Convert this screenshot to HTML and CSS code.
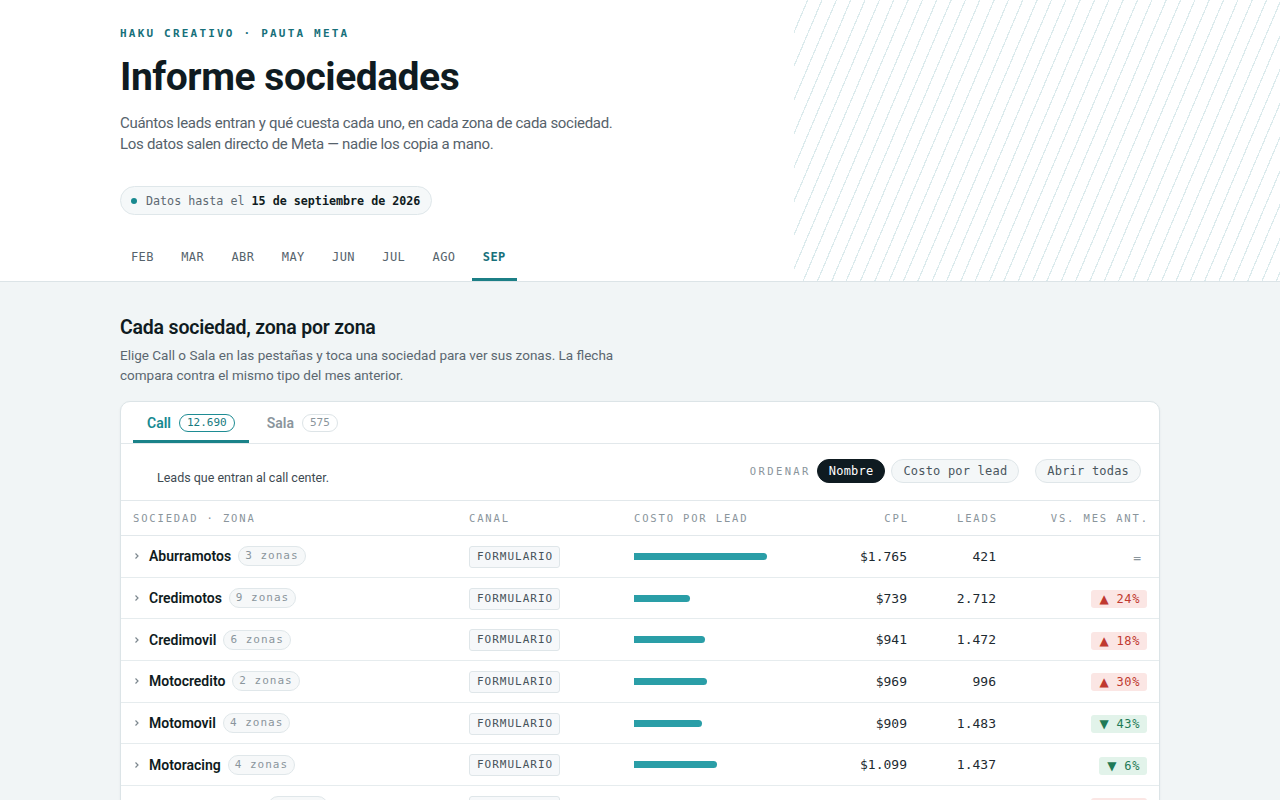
FILE: index.html
```html
<!DOCTYPE html>
<html lang="es">
<head>
<meta charset="utf-8">
<title>Informe sociedades</title>
<link rel="stylesheet" href="styles.css">
</head>
<body>
<header class="hero">
  <div class="hero-pattern"></div>
  <div class="wrap hero-inner">
    <p class="eyebrow">HAKU CREATIVO · PAUTA META</p>
    <h1>Informe sociedades</h1>
    <p class="lede">Cuántos leads entran y qué cuesta cada uno, en cada zona de cada sociedad.<br>Los datos salen directo de Meta — nadie los copia a mano.</p>
    <div class="stamp"><span class="dot"></span><span class="stamp-label">Datos hasta el</span><strong class="stamp-date">15 de septiembre de 2026</strong></div>
    <nav class="months">
      <span class="month">FEB</span>
      <span class="month">MAR</span>
      <span class="month">ABR</span>
      <span class="month">MAY</span>
      <span class="month">JUN</span>
      <span class="month">JUL</span>
      <span class="month">AGO</span>
      <span class="month active">SEP</span>
    </nav>
  </div>
</header>

<main class="wrap section">
  <h2>Cada sociedad, zona por zona</h2>
  <p class="section-sub">Elige Call o Sala en las pestañas y toca una sociedad para ver sus zonas. La flecha<br>compara contra el mismo tipo del mes anterior.</p>

  <div class="card">
    <div class="ctabs">
      <div class="ctab active">Call <span class="count">12.690</span></div>
      <div class="ctab">Sala <span class="count">575</span></div>
    </div>

    <div class="toolbar">
      <p class="note">Leads que entran al call center.</p>
      <div class="controls">
        <span class="ord-label">ORDENAR</span>
        <span class="btn on">Nombre</span>
        <span class="btn">Costo por lead</span>
        <span class="btn open">Abrir todas</span>
      </div>
    </div>

    <div class="thead grid">
      <span>SOCIEDAD · ZONA</span>
      <span>CANAL</span>
      <span>COSTO POR LEAD</span>
      <span class="r">CPL</span>
      <span class="r">LEADS</span>
      <span class="r">VS. MES ANT.</span>
    </div>

    <div class="trow grid">
      <div class="soc"><svg class="chev" viewBox="0 0 8 8"><polyline points="2.5,1.5 5,4 2.5,6.5"/></svg><span class="name">Aburramotos</span><span class="zonas">3 zonas</span></div>
      <div><span class="chip">FORMULARIO</span></div>
      <div><div class="bar" style="width:133px"></div></div>
      <div class="num">$1.765</div>
      <div class="num">421</div>
      <div class="delta"><span class="eq">=</span></div>
    </div>

    <div class="trow grid">
      <div class="soc"><svg class="chev" viewBox="0 0 8 8"><polyline points="2.5,1.5 5,4 2.5,6.5"/></svg><span class="name">Credimotos</span><span class="zonas">9 zonas</span></div>
      <div><span class="chip">FORMULARIO</span></div>
      <div><div class="bar" style="width:56px"></div></div>
      <div class="num">$739</div>
      <div class="num">2.712</div>
      <div class="delta"><span class="pill up"><span class="tri">▲</span> 24%</span></div>
    </div>

    <div class="trow grid">
      <div class="soc"><svg class="chev" viewBox="0 0 8 8"><polyline points="2.5,1.5 5,4 2.5,6.5"/></svg><span class="name">Credimovil</span><span class="zonas">6 zonas</span></div>
      <div><span class="chip">FORMULARIO</span></div>
      <div><div class="bar" style="width:71px"></div></div>
      <div class="num">$941</div>
      <div class="num">1.472</div>
      <div class="delta"><span class="pill up"><span class="tri">▲</span> 18%</span></div>
    </div>

    <div class="trow grid">
      <div class="soc"><svg class="chev" viewBox="0 0 8 8"><polyline points="2.5,1.5 5,4 2.5,6.5"/></svg><span class="name">Motocredito</span><span class="zonas">2 zonas</span></div>
      <div><span class="chip">FORMULARIO</span></div>
      <div><div class="bar" style="width:73px"></div></div>
      <div class="num">$969</div>
      <div class="num">996</div>
      <div class="delta"><span class="pill up"><span class="tri">▲</span> 30%</span></div>
    </div>

    <div class="trow grid">
      <div class="soc"><svg class="chev" viewBox="0 0 8 8"><polyline points="2.5,1.5 5,4 2.5,6.5"/></svg><span class="name">Motomovil</span><span class="zonas">4 zonas</span></div>
      <div><span class="chip">FORMULARIO</span></div>
      <div><div class="bar" style="width:68px"></div></div>
      <div class="num">$909</div>
      <div class="num">1.483</div>
      <div class="delta"><span class="pill down"><span class="tri">▼</span> 43%</span></div>
    </div>

    <div class="trow grid">
      <div class="soc"><svg class="chev" viewBox="0 0 8 8"><polyline points="2.5,1.5 5,4 2.5,6.5"/></svg><span class="name">Motoracing</span><span class="zonas">4 zonas</span></div>
      <div><span class="chip">FORMULARIO</span></div>
      <div><div class="bar" style="width:83px"></div></div>
      <div class="num">$1.099</div>
      <div class="num">1.437</div>
      <div class="delta"><span class="pill down"><span class="tri">▼</span> 6%</span></div>
    </div>

    <div class="trow grid">
      <div class="soc"><svg class="chev" viewBox="0 0 8 8"><polyline points="2.5,1.5 5,4 2.5,6.5"/></svg><span class="name">Motos del Oriente</span><span class="zonas">1 zona</span></div>
      <div><span class="chip">FORMULARIO</span></div>
      <div><div class="bar" style="width:90px"></div></div>
      <div class="num">$1.190</div>
      <div class="num">612</div>
      <div class="delta"><span class="pill up"><span class="tri">▲</span> 12%</span></div>
    </div>

    <div class="trow grid">
      <div class="soc"><svg class="chev" viewBox="0 0 8 8"><polyline points="2.5,1.5 5,4 2.5,6.5"/></svg><span class="name">Rapimotos</span><span class="zonas">3 zonas</span></div>
      <div><span class="chip">FORMULARIO</span></div>
      <div><div class="bar" style="width:62px"></div></div>
      <div class="num">$822</div>
      <div class="num">1.081</div>
      <div class="delta"><span class="pill down"><span class="tri">▼</span> 9%</span></div>
    </div>
  </div>
</main>
</body>
</html>
```

FILE: styles.css
```css
* { box-sizing: border-box; }

body {
  margin: 0;
  background: #f1f5f6;
  font-family: Roboto, "Noto Sans", sans-serif;
  color: #0f1b21;
}

.wrap {
  width: 1040px;
  margin: 0 auto;
}

/* ---------- hero ---------- */
.hero {
  position: relative;
  background: #ffffff;
  border-bottom: 1px solid #dce4e7;
  overflow: hidden;
}

.hero-pattern {
  position: absolute;
  top: 0;
  right: 0;
  bottom: 0;
  width: 38%;
  background: repeating-linear-gradient(113deg, rgba(255,255,255,0) 0 12px, #dcebed 12px 13.2px);
}

.hero-inner {
  position: relative;
  padding-top: 26px;
}

.eyebrow {
  margin: 0;
  font-family: "DejaVu Sans Mono", "Liberation Mono", monospace;
  font-size: 11px;
  line-height: 16px;
  font-weight: 700;
  letter-spacing: 2.2px;
  color: #17707a;
}

h1 {
  margin: 14px 0 0;
  font-size: 39px;
  line-height: 43px;
  font-weight: 700;
  letter-spacing: -0.012em;
  color: #0f1b21;
}

.lede {
  margin: 14px 0 0;
  font-size: 15px;
  line-height: 21px;
  letter-spacing: -0.3px;
  color: #56626b;
}

.stamp {
  display: inline-flex;
  align-items: center;
  height: 29px;
  margin-top: 31px;
  padding: 0 11px 0 10px;
  border: 1px solid #dfe7ea;
  border-radius: 15px;
  background: #f5f8f9;
  font-family: "DejaVu Sans Mono", "Liberation Mono", monospace;
  font-size: 11.7px;
}

.dot {
  width: 6px;
  height: 6px;
  border-radius: 50%;
  background: #18898f;
  margin-right: 9px;
}

.stamp-label {
  color: #5d6972;
  margin-right: 7px;
}

.stamp-date {
  font-weight: 700;
  color: #0f1b21;
}

.months {
  display: flex;
  gap: 5.5px;
  margin-top: 22px;
}

.month {
  padding: 12px 11px 13px;
  border-bottom: 3px solid transparent;
  font-family: "DejaVu Sans Mono", "Liberation Mono", monospace;
  font-size: 12px;
  line-height: 16px;
  letter-spacing: 0.03em;
  color: #56636c;
}

.month.active {
  color: #17707a;
  font-weight: 700;
  border-bottom-color: #1c7f86;
}

/* ---------- section ---------- */
.section {
  padding-top: 34px;
  padding-bottom: 40px;
}

h2 {
  margin: 0;
  font-size: 19.5px;
  line-height: 24px;
  font-weight: 600;
  letter-spacing: -0.01em;
}

.section-sub {
  margin: 5px 0 0;
  font-size: 13.5px;
  line-height: 20px;
  color: #5b6770;
}

.card {
  margin-top: 16px;
  background: #ffffff;
  border: 1px solid #dce4e7;
  border-radius: 10px;
  box-shadow: 0 1px 3px rgba(16, 40, 50, 0.05);
  overflow: hidden;
}

.ctabs {
  display: flex;
  gap: 4px;
  padding-left: 12px;
  border-bottom: 1px solid #e2e8eb;
}

.ctab {
  display: flex;
  align-items: center;
  gap: 8px;
  height: 41px;
  padding: 3px 14px 0;
  border-bottom: 3px solid transparent;
  font-size: 14px;
  font-weight: 600;
  color: #8a959c;
}

.ctab.active {
  color: #168990;
  border-bottom-color: #1a8289;
}

.count {
  font-family: "DejaVu Sans Mono", "Liberation Mono", monospace;
  font-size: 11px;
  line-height: 16px;
  font-weight: 400;
  padding: 0 7px;
  border: 1px solid #dde4e7;
  border-radius: 9px;
  color: #8a959c;
}

.ctab.active .count {
  border-color: #1e8c93;
  color: #167a80;
}

.toolbar {
  display: flex;
  justify-content: space-between;
  height: 57px;
  padding: 15px 18px 13px 36px;
  border-bottom: 1px solid #e2e8eb;
}

.note {
  align-self: flex-end;
  margin: 0;
  font-size: 12.5px;
  line-height: 18px;
  color: #3e4a52;
}

.controls {
  display: flex;
  align-items: center;
  align-self: flex-start;
}

.ord-label {
  margin-right: 6px;
  font-family: "DejaVu Sans Mono", "Liberation Mono", monospace;
  font-size: 10.5px;
  letter-spacing: 2.4px;
  color: #8a959c;
}

.btn {
  height: 24px;
  padding: 0 11px;
  border: 1px solid #dfe6e9;
  border-radius: 12px;
  background: #f4f7f8;
  font-family: "DejaVu Sans Mono", "Liberation Mono", monospace;
  font-size: 12px;
  line-height: 22px;
  letter-spacing: 0.2px;
  color: #4a565e;
}

.btn + .btn { margin-left: 6px; }

.btn.on {
  background: #0f1b21;
  border-color: #0f1b21;
  color: #ffffff;
}

.btn.open { margin-left: 16px; }

/* ---------- table ---------- */
.grid {
  display: grid;
  grid-template-columns: 336px 165px 177px 96px 89px 151px;
  align-items: center;
  padding: 0 12px;
}

.thead {
  height: 35px;
  border-bottom: 1px solid #e2e8eb;
  font-family: "DejaVu Sans Mono", "Liberation Mono", monospace;
  font-size: 10.5px;
  letter-spacing: 1.85px;
  color: #8a959c;
}

.thead .r {
  text-align: right;
  margin-right: -1.85px;
}

.trow {
  height: 41.7px;
  border-bottom: 1px solid #e6ecee;
}

.soc {
  display: flex;
  align-items: center;
}

.chev {
  width: 8px;
  height: 8px;
  margin-right: 8px;
  fill: none;
  stroke: #7c878e;
  stroke-width: 1.2;
}

.name {
  font-size: 14px;
  font-weight: 600;
  color: #0f1b21;
}

.zonas {
  margin-left: 7px;
  padding: 0 6px;
  border: 1px solid #e0e7ea;
  border-radius: 10px;
  background: #f6f8f9;
  font-family: "DejaVu Sans Mono", "Liberation Mono", monospace;
  font-size: 11px;
  line-height: 18px;
  letter-spacing: 1px;
  color: #8a959c;
}

.chip {
  display: inline-block;
  padding: 0 6px 0 7px;
  border: 1px solid #dfe6e9;
  border-radius: 3px;
  background: #f6f8fa;
  font-family: "DejaVu Sans Mono", "Liberation Mono", monospace;
  font-size: 11px;
  line-height: 20px;
  letter-spacing: 1px;
  color: #47535b;
}

.bar {
  height: 7px;
  background: #2a9ea7;
  border-radius: 0 4px 4px 0;
}

.num {
  text-align: right;
  font-family: "DejaVu Sans Mono", "Liberation Mono", monospace;
  font-size: 13px;
  color: #1d2a31;
}

.delta {
  text-align: right;
}

.eq {
  margin-right: 6px;
  font-family: "DejaVu Sans Mono", "Liberation Mono", monospace;
  font-size: 13px;
  color: #8a959c;
}

.pill {
  display: inline-block;
  padding: 0 7px 0 8px;
  border-radius: 3px;
  font-family: "DejaVu Sans Mono", "Liberation Mono", monospace;
  font-size: 12px;
  line-height: 18px;
  letter-spacing: 0.6px;
}

.tri {
  font-family: "DejaVu Sans", sans-serif;
  font-size: 12px;
  letter-spacing: 0;
}

.pill.up {
  background: #fbe6e4;
  color: #c0392f;
}

.pill.down {
  background: #e2f3ea;
  color: #1f7a56;
}
```
